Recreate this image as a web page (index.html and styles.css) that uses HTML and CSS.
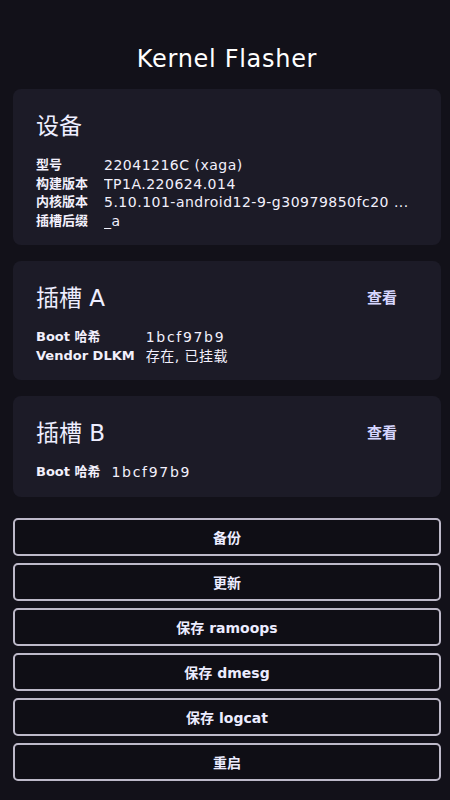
FILE: index.html
```html
<!DOCTYPE html>
<html lang="zh-CN">
<head>
    <meta charset="UTF-8">
    <meta name="viewport" content="width=device-width, initial-scale=1.0">
    <title>Kernel Flasher</title>
    <link rel="stylesheet" href="styles.css">
</head>
<body>
    <div class="app">
        <header class="topbar">
            <h1>Kernel Flasher</h1>
        </header>

        <section class="card">
            <div class="card-head">
                <h2>设备</h2>
            </div>
            <div class="info info-device">
                <span class="key">型号</span><span class="val">22041216C (xaga)</span>
                <span class="key">构建版本</span><span class="val">TP1A.220624.014</span>
                <span class="key">内核版本</span><span class="val">5.10.101-android12-9-g30979850fc20 ...</span>
                <span class="key">插槽后缀</span><span class="val">_a</span>
            </div>
        </section>

        <section class="card">
            <div class="card-head">
                <h2>插槽 A</h2>
                <a class="view" href="#">查看</a>
            </div>
            <div class="info">
                <span class="key">Boot 哈希</span><span class="val hash">1bcf97b9</span>
                <span class="key">Vendor DLKM</span><span class="val">存在, 已挂载</span>
            </div>
        </section>

        <section class="card">
            <div class="card-head">
                <h2>插槽 B</h2>
                <a class="view" href="#">查看</a>
            </div>
            <div class="info">
                <span class="key">Boot 哈希</span><span class="val hash">1bcf97b9</span>
            </div>
        </section>

        <div class="actions">
            <button class="btn">备份</button>
            <button class="btn">更新</button>
            <button class="btn">保存 ramoops</button>
            <button class="btn">保存 dmesg</button>
            <button class="btn">保存 logcat</button>
            <button class="btn">重启</button>
        </div>
    </div>
</body>
</html>
```

FILE: styles.css
```css
body {
    margin: 0;
    padding: 0;
    background: #121119;
    color: #f2f0fc;
    font-family: 'DejaVu Sans', 'Noto Sans CJK SC', sans-serif;
}
.app {
    padding: 0 9px 0 13px;
    display: flex;
    flex-direction: column;
}
.topbar {
    height: 89px;
    display: flex;
    align-items: center;
    justify-content: center;
}
.topbar h1 {
    margin: 0;
    padding-top: 29px;
    font-size: 24px;
    font-weight: 400;
    letter-spacing: 0.7px;
    color: #fff;
}
.card {
    background: #1c1b27;
    border-radius: 8px;
    padding: 21px 23px 15px;
    margin-bottom: 16px;
}
.card-head {
    display: flex;
    align-items: center;
    justify-content: space-between;
    height: 28px;
    margin-bottom: 18px;
}
.card-head h2 {
    margin: 0;
    font-size: 23px;
    font-weight: 400;
    color: #eeeeff;
}
.view {
    margin-right: 21px;
    font-size: 15px;
    font-weight: 700;
    color: #d6d6ff;
    text-decoration: none;
}
.info {
    display: grid;
    grid-template-columns: auto 1fr;
    column-gap: 11px;
    font-size: 13px;
    line-height: 18.5px;
}
.info-device {
    column-gap: 16px;
}
.key {
    font-weight: 700;
}
.val {
    font-size: 14px;
    letter-spacing: 0.5px;
    white-space: nowrap;
    overflow: hidden;
}
.hash {
    letter-spacing: 1.7px;
}
.actions {
    display: flex;
    flex-direction: column;
    gap: 7px;
    margin-top: 5px;
}
.btn {
    height: 38px;
    background: #0f0e15;
    border: 2px solid #bdb9c9;
    border-radius: 5px;
    color: #ececff;
    font-family: 'DejaVu Sans', 'Noto Sans CJK SC', sans-serif;
    font-size: 14px;
    font-weight: 700;
}
```
